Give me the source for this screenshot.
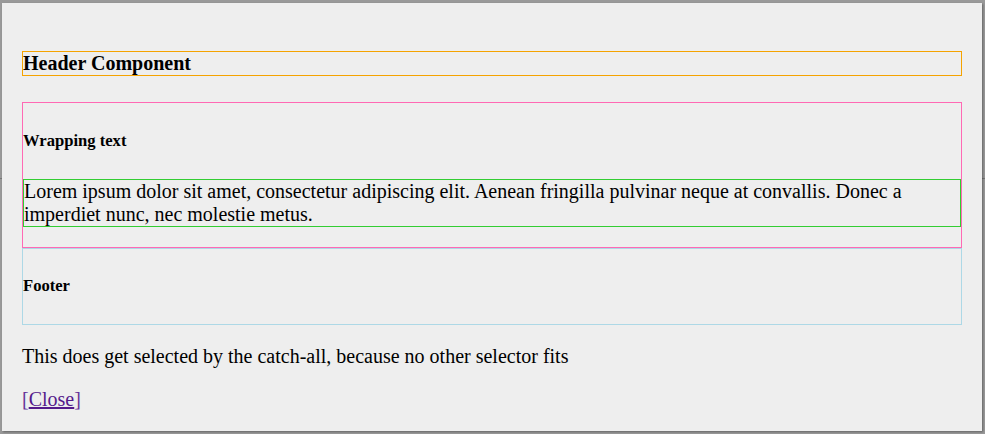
import React from "react";

export default function App() {
  return (
    <div className="relative w-[985px] h-[434px] bg-[#999999] pt-[3px] pl-[2px] overflow-hidden" style={{ fontFamily: '"Liberation Serif", "Times New Roman", serif' }}>
      <div className="absolute left-0 right-0 top-[178px] h-[1px] bg-[#777777]" />
      <div className="relative z-10 w-[980px] h-[428px] bg-[#eeeeee] px-[20px] pt-[48px] text-black text-[20px] leading-[23px] shadow-[1px_1px_2px_rgba(0,0,0,0.35)]">
        <div className="border border-[#f5a300] h-[25px]">
          <h4 className="font-bold text-[20px] leading-[23px]">Header Component</h4>
        </div>
        <div className="mt-[26px] border border-[#ff69b4] pt-[28px] pb-[20px]">
          <h5 className="font-bold text-[16.6px] leading-[19px]">Wrapping text</h5>
          <p className="mt-[29px] border border-[#32cd32] text-[20px] leading-[23px]">
            Lorem ipsum dolor sit amet, consectetur adipiscing elit. Aenean fringilla pulvinar neque at convallis. Donec a imperdiet nunc, nec molestie metus.
          </p>
        </div>
        <div className="border border-[#add8e6] pt-[27px] pb-[29px]">
          <h5 className="font-bold text-[16.6px] leading-[19px]">Footer</h5>
        </div>
        <p className="mt-[20px]">This does get selected by the catch-all, because no other selector fits</p>
        <p className="mt-[20px] text-[#663399]">
          [<a href="#" className="text-[#551a8b] underline">Close</a>]
        </p>
      </div>
    </div>
  );
}
